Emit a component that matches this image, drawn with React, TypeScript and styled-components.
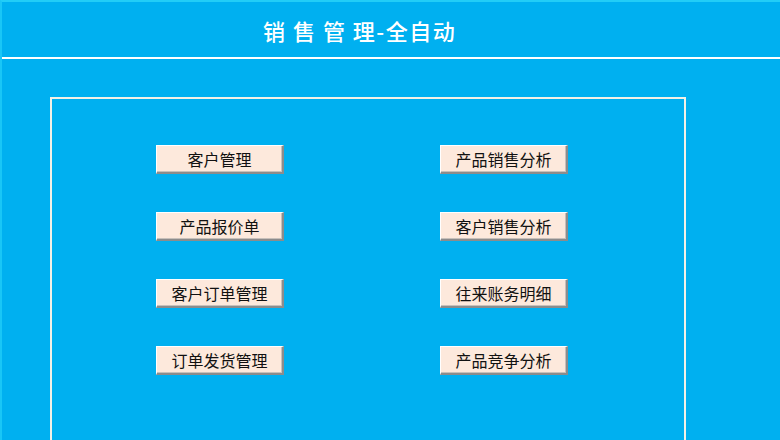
import React from 'react'
import styled, { createGlobalStyle } from 'styled-components'

const GlobalStyle = createGlobalStyle`
    html, body {
        margin: 0;
        padding: 0;
        background-color: #00b0f0;
    }
    body {
        width: 780px;
        height: 440px;
        overflow: hidden;
        font-family: "Noto Sans CJK SC", "Noto Sans", sans-serif;
    }
`

const Window = styled.div`
    height: 440px;
    box-sizing: border-box;
    border-left: 2px solid #19c6f6;
    border-top: 2px solid #22cdf7;
    background-color: #00b0f0;
    overflow: hidden;
`

const TitleBar = styled.header`
    height: 55px;
    border-bottom: 2px solid #ffffff;
    display: flex;
    align-items: center;
    padding-left: 261px;
`

const Title = styled.h1`
    margin: 0;
    font-size: 22px;
    font-weight: 500;
    color: #ffffff;
    letter-spacing: 1.5px;
    white-space: pre;
`

const Panel = styled.section`
    margin: 38px 0 0 48px;
    width: 636px;
    height: 400px;
    box-sizing: border-box;
    border: 2px solid #f4f1e6;
    border-bottom: none;
    padding: 46px 0 0 104px;
`

const ButtonGrid = styled.div`
    display: grid;
    grid-template-columns: 128px 128px;
    grid-auto-rows: 29px;
    column-gap: 156px;
    row-gap: 38px;
`

const FormButton = styled.button`
    box-sizing: border-box;
    width: 128px;
    height: 29px;
    padding: 0;
    background-color: #fde9dc;
    border-top: 1px solid #ffffff;
    border-left: 1px solid #ffffff;
    border-right: 2px solid #8c8c8c;
    border-bottom: 2px solid #8c8c8c;
    box-shadow: inset -1px -1px 0 #c8c0ba;
    font-family: "Noto Sans CJK SC", "Noto Sans", sans-serif;
    font-size: 16px;
    color: #111111;
    line-height: 1;
    cursor: pointer;
`

const buttons = [
    '客户管理',
    '产品销售分析',
    '产品报价单',
    '客户销售分析',
    '客户订单管理',
    '往来账务明细',
    '订单发货管理',
    '产品竞争分析',
]

export default function App() {
    return (
        <>
            <GlobalStyle />
            <Window>
                <TitleBar>
                    <Title>{'销 售 管 理-全自动'}</Title>
                </TitleBar>
                <Panel>
                    <ButtonGrid>
                        {buttons.map((label) => (
                            <FormButton key={label}>{label}</FormButton>
                        ))}
                    </ButtonGrid>
                </Panel>
            </Window>
        </>
    )
}
